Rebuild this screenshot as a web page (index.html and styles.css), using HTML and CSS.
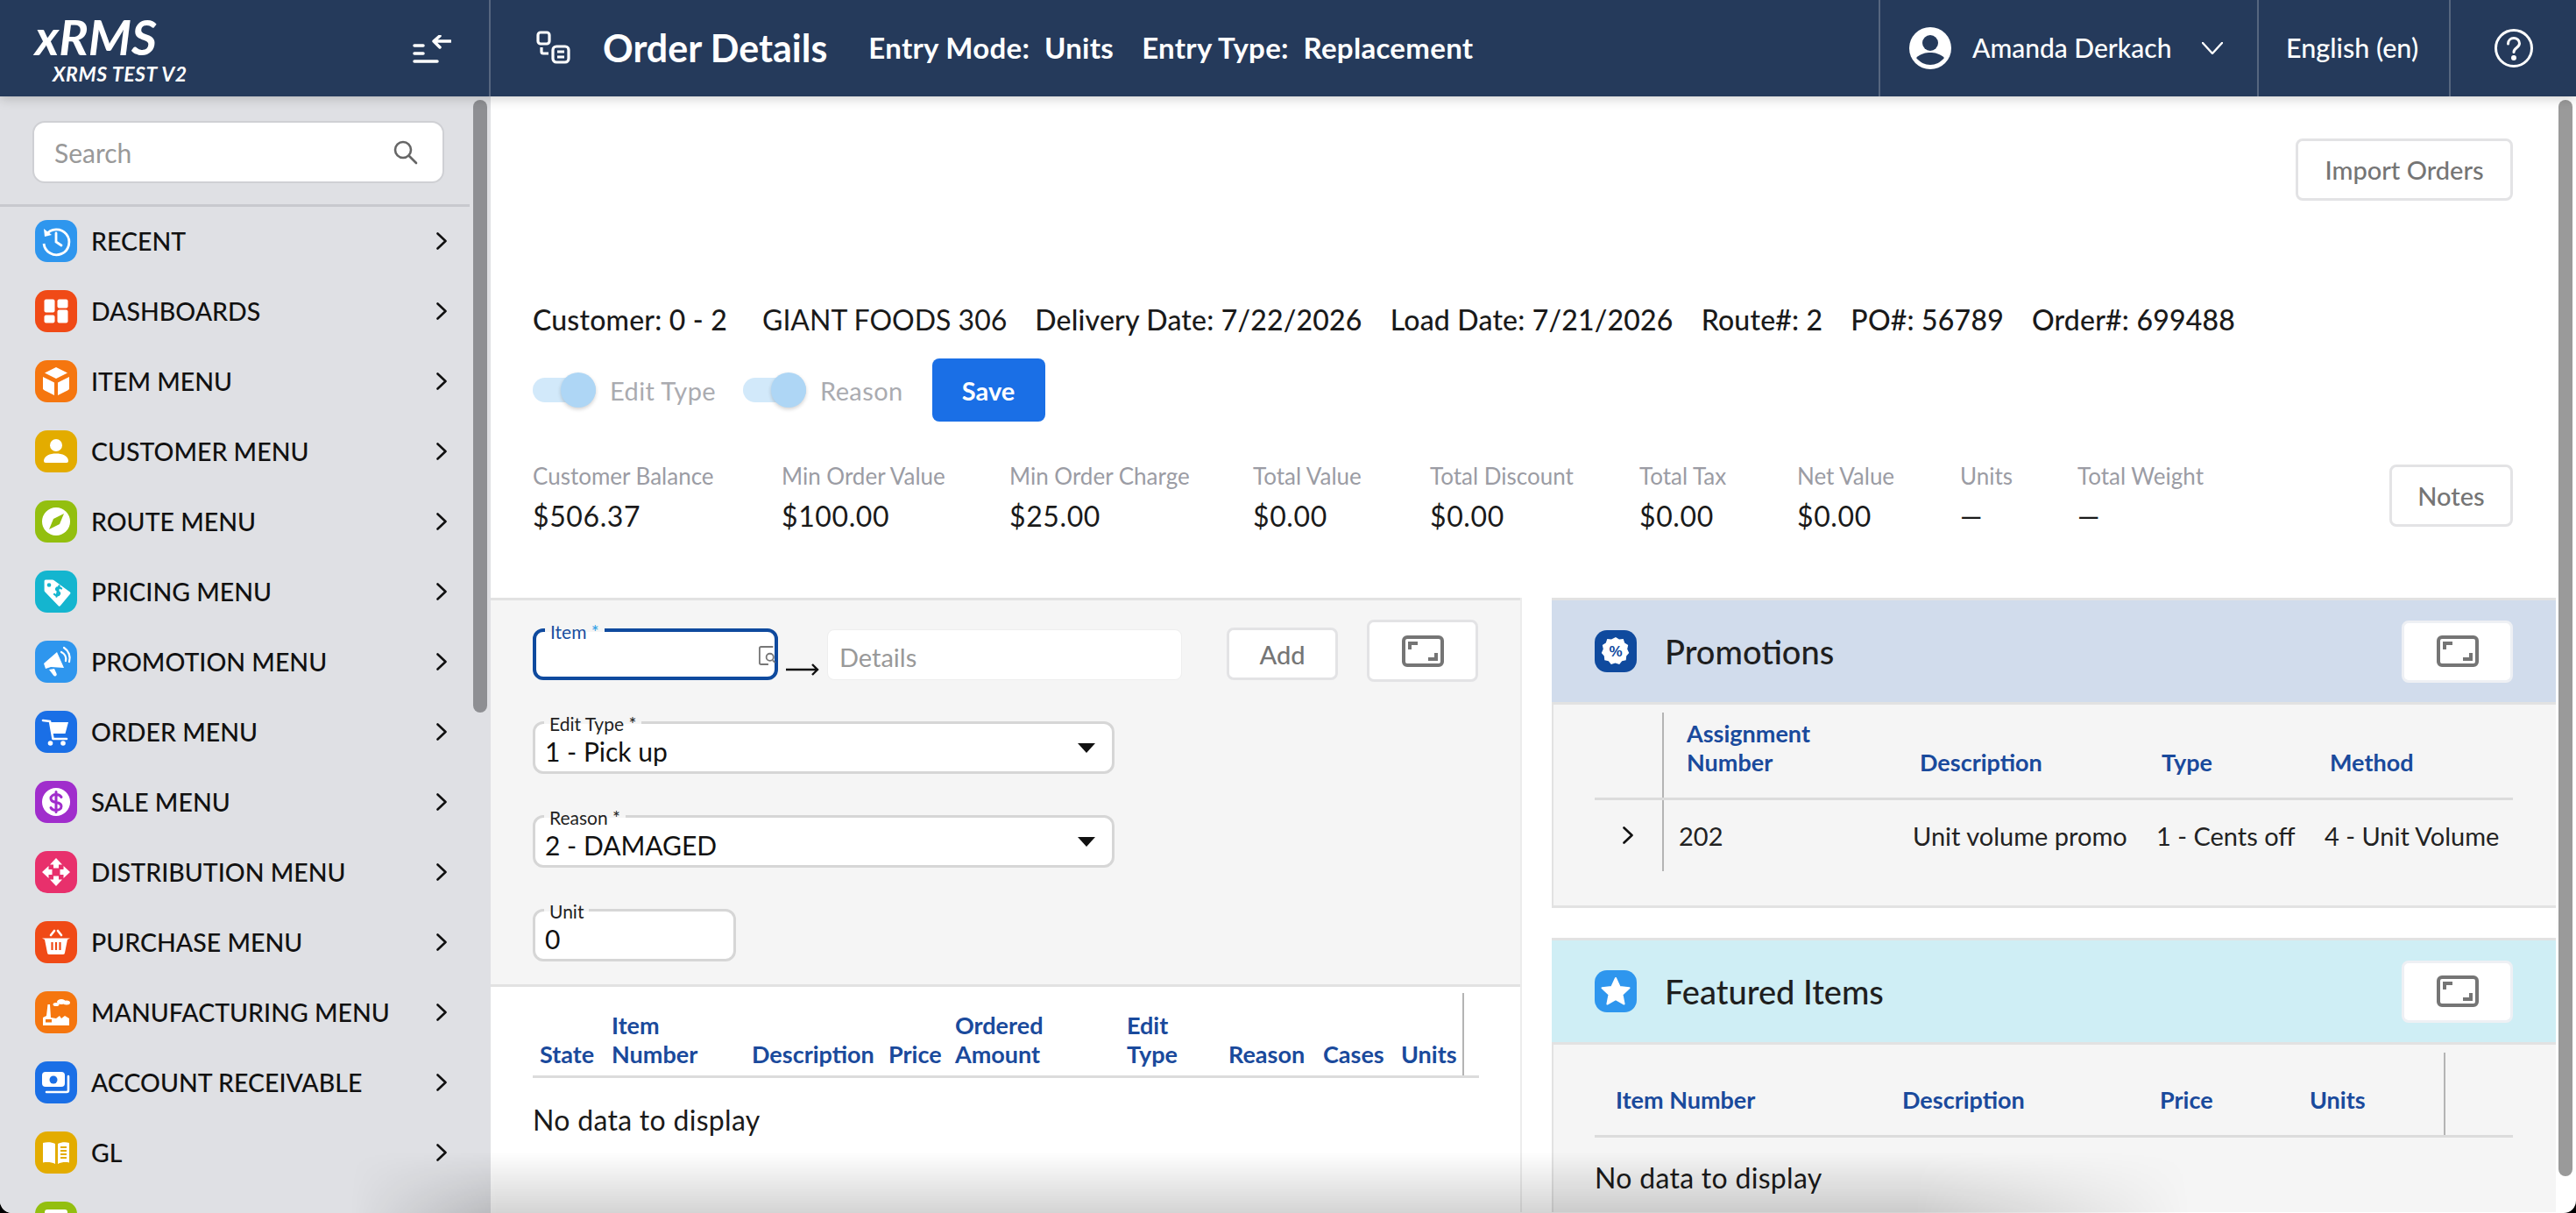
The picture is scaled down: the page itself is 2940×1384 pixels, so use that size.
FILE: index.html
```html
<!DOCTYPE html>
<html lang="en">
<head>
    <meta charset="UTF-8">
    <title>Order Details</title>
    <link rel="stylesheet" href="styles.css">
</head>
<body>
<div class="app">
    <header class="topbar">
        <div class="brand">
            <div class="logo">
                <div class="logo-name">xRMS</div>
                <div class="logo-sub">XRMS TEST V2</div>
            </div>
            <svg class="collapse-icon" viewBox="0 0 44 32" fill="none" stroke="#fff" stroke-width="3.5" stroke-linecap="round" stroke-linejoin="round">
                <path d="M2 12h10M2 21h10M2 30h26M43 7H24M31 1l-7 6 7 7"/>
            </svg>
        </div>
        <div class="page-title">
            <svg class="page-icon" viewBox="0 0 40 38" fill="none" stroke="#fff" stroke-width="3.2" stroke-linejoin="round">
                <rect x="2" y="2" width="13" height="13" rx="3"/>
                <path d="M6 19v5a2 2 0 0 0 2 2h6"/>
                <rect x="19" y="18" width="18" height="18" rx="4"/>
                <path d="M24 24h8M24 30h8"/>
            </svg>
            <h1>Order Details</h1>
            <span class="entry-info">Entry Mode:&nbsp; Units</span>
            <span class="entry-info">Entry Type:&nbsp; Replacement</span>
        </div>
        <div class="user-box">
            <svg class="avatar" viewBox="0 0 48 48">
                <circle cx="24" cy="24" r="24" fill="#fff"/>
                <circle cx="24" cy="18" r="9" fill="#253a5b"/>
                <path d="M8 35c5-5 11-6 16-6s11 1 16 6c-4 5-10 8-16 8s-12-3-16-8z" fill="#253a5b"/>
            </svg>
            <span class="user-name">Amanda Derkach</span>
            <svg class="user-caret" viewBox="0 0 24 14" fill="none" stroke="#fff" stroke-width="2.4" stroke-linecap="round" stroke-linejoin="round"><path d="M1 1l11 12L23 1"/></svg>
        </div>
        <div class="lang-box">English (en)</div>
        <div class="help-box">
            <svg class="help-icon" viewBox="0 0 44 44" fill="none" stroke="#fff" stroke-width="3"><circle cx="22" cy="22" r="20.5"/><path d="M15.5 17c0-4 3-6.500 6.500-6.500s6.500 2.500 6.500 6c0 5-6.500 5-6.500 10" stroke-linecap="round"/><circle cx="22" cy="33" r="1.500" fill="#fff"/></svg>
        </div>
    </header>

    <div class="layout">
        <aside class="sidebar">
            <div class="search-wrap">
                <div class="search-box">
                    <span>Search</span>
                    <svg class="search-icon" viewBox="0 0 28 28" fill="none" stroke="#666" stroke-width="2.600" stroke-linecap="round"><circle cx="11" cy="11" r="9"/><path d="M18 18l8 8"/></svg>
                </div>
            </div>
            <nav class="menu">
                <div class="menu-item"><span class="ico ico-blue"><svg viewBox="0 0 48 48"><path d="M12.500 17A14.500 14.500 0 1 1 10 27" fill="none" stroke="#fff" stroke-width="2.800"/><path d="M10 10l1 9 8-2z" fill="#fff"/><path d="M24 15v10l6 4" fill="none" stroke="#fff" stroke-width="2.800" stroke-linecap="round"/></svg></span><span class="menu-label">RECENT</span><svg class="chev" viewBox="0 0 12 20"><path d="M1.500 1.500l9 8.500-9 8.500"/></svg></div>
                <div class="menu-item"><span class="ico ico-red"><svg viewBox="0 0 48 48" fill="#fff"><rect x="10.500" y="10.500" width="12" height="15" rx="2"/><rect x="25.500" y="10.500" width="12" height="10" rx="2"/><rect x="10.500" y="28.500" width="12" height="9" rx="2"/><rect x="25.500" y="22.500" width="12" height="15" rx="2"/></svg></span><span class="menu-label">DASHBOARDS</span><svg class="chev" viewBox="0 0 12 20"><path d="M1.500 1.500l9 8.500-9 8.500"/></svg></div>
                <div class="menu-item"><span class="ico ico-orange"><svg viewBox="0 0 48 48" fill="#fff"><path d="M24 8l13 6.500-13 6.500-13-6.500z"/><path d="M9 19l13 6.500V40L11 34.500 9 33z"/><path d="M39 19l-13 6.500V40l11-5.500 2-1.500z"/></svg></span><span class="menu-label">ITEM MENU</span><svg class="chev" viewBox="0 0 12 20"><path d="M1.500 1.500l9 8.500-9 8.500"/></svg></div>
                <div class="menu-item"><span class="ico ico-yellow"><svg viewBox="0 0 48 48" fill="#fff"><circle cx="24" cy="17" r="7"/><path d="M10 35c0-6 7-8.500 14-8.500S38 29 38 35a2 2 0 0 1-2 2H12a2 2 0 0 1-2-2z"/></svg></span><span class="menu-label">CUSTOMER MENU</span><svg class="chev" viewBox="0 0 12 20"><path d="M1.500 1.500l9 8.500-9 8.500"/></svg></div>
                <div class="menu-item"><span class="ico ico-green"><svg viewBox="0 0 48 48"><circle cx="24" cy="24" r="16" fill="#fff"/><path d="M33 15l-5 12-12 6 5-12z" fill="#93bf0f"/></svg></span><span class="menu-label">ROUTE MENU</span><svg class="chev" viewBox="0 0 12 20"><path d="M1.500 1.500l9 8.500-9 8.500"/></svg></div>
                <div class="menu-item"><span class="ico ico-teal"><svg viewBox="0 0 48 48"><path d="M12 10.500h8a2 2 0 0 1 1.400.6l18.500 13.400a1.500 1.500 0 0 1 .3 2L29 40a1.500 1.500 0 0 1-2.300.200L11.500 24.500a2 2 0 0 1-.9-1.500V12a1.500 1.500 0 0 1 1.400-1.500z" fill="#fff"/><circle cx="16" cy="16.500" r="2.300" fill="#14b5cf"/><path d="M30 20.500c-2-2-5.500-1.500-6 .5s5 3 4 5.500-4.500 2-6 .5M27.500 17.500l-3 12" fill="none" stroke="#14b5cf" stroke-width="2.400" stroke-linecap="round"/></svg></span><span class="menu-label">PRICING MENU</span><svg class="chev" viewBox="0 0 12 20"><path d="M1.500 1.500l9 8.500-9 8.500"/></svg></div>
                <div class="menu-item"><span class="ico ico-sky"><svg viewBox="0 0 48 48" fill="#fff"><path d="M25 13l8 18-15-1-6 2-2-6z"/><path d="M16 33l6-1 2.500 5.500a2 2 0 0 1-3.500 2z"/><path d="M30 13a9 9 0 0 1 5 10M33 8a14 14 0 0 1 6 16" fill="none" stroke="#fff" stroke-width="2.300" stroke-linecap="round"/></svg></span><span class="menu-label">PROMOTION MENU</span><svg class="chev" viewBox="0 0 12 20"><path d="M1.500 1.500l9 8.500-9 8.500"/></svg></div>
                <div class="menu-item"><span class="ico ico-royal"><svg viewBox="0 0 48 48"><path d="M9 11l8 1 3.500 20H36" fill="none" stroke="#fff" stroke-width="2.600" stroke-linecap="round" stroke-linejoin="round"/><path d="M18 13h20l-3.500 13H20z" fill="#fff"/><circle cx="17.500" cy="37" r="2.800" fill="#fff"/><circle cx="32" cy="37" r="2.800" fill="#fff"/></svg></span><span class="menu-label">ORDER MENU</span><svg class="chev" viewBox="0 0 12 20"><path d="M1.500 1.500l9 8.500-9 8.500"/></svg></div>
                <div class="menu-item"><span class="ico ico-purple"><svg viewBox="0 0 48 48"><circle cx="24" cy="24" r="16" fill="#fff"/><path d="M30 18.500c-1-2-3.500-3-6-3-3 0-6 1.500-6 4.500s3 4 6 4.500 6 1.500 6 4.500-3 4.500-6 4.500c-2.500 0-5-1-6-3M24 12.500v23" fill="none" stroke="#a02dcc" stroke-width="3" stroke-linecap="round"/></svg></span><span class="menu-label">SALE MENU</span><svg class="chev" viewBox="0 0 12 20"><path d="M1.500 1.500l9 8.500-9 8.500"/></svg></div>
                <div class="menu-item"><span class="ico ico-pink"><svg viewBox="0 0 48 48" fill="#fff"><path d="M24 8l7 7.500h-4v4h-6v-4h-4z"/><path d="M24 40l7-7.500h-4v-4h-6v4h-4z"/><path d="M8 24l7.500-7v4h4v6h-4v4z"/><path d="M40 24l-7.500-7v4h-4v6h4v4z"/></svg></span><span class="menu-label">DISTRIBUTION MENU</span><svg class="chev" viewBox="0 0 12 20"><path d="M1.500 1.500l9 8.500-9 8.500"/></svg></div>
                <div class="menu-item"><span class="ico ico-red"><svg viewBox="0 0 48 48"><path d="M8 19.500h32l-3 1.500-3 15a2 2 0 0 1-2 2H16a2 2 0 0 1-2-2l-3-15z" fill="#fff"/><path d="M19.500 24v9M24 24v9M28.500 24v9" stroke="#f04a16" stroke-width="2.200"/><path d="M18 16l4-5M30 16l-4-5" stroke="#fff" stroke-width="2.600" stroke-linecap="round"/></svg></span><span class="menu-label">PURCHASE MENU</span><svg class="chev" viewBox="0 0 12 20"><path d="M1.500 1.500l9 8.500-9 8.500"/></svg></div>
                <div class="menu-item"><span class="ico ico-orange"><svg viewBox="0 0 48 48" fill="#fff"><path d="M9 39V30l4-2 1.500-13h2.500l1 15 6 1 4-3 2 3 4-3 5 3v8z"/><ellipse cx="30" cy="12" rx="5" ry="3"/><ellipse cx="36" cy="13" rx="4" ry="2.500"/><ellipse cx="24" cy="15" rx="3.500" ry="2"/><rect x="12" y="32" width="7" height="3.500" fill="#f5760f"/></svg></span><span class="menu-label">MANUFACTURING MENU</span><svg class="chev" viewBox="0 0 12 20"><path d="M1.500 1.500l9 8.500-9 8.500"/></svg></div>
                <div class="menu-item"><span class="ico ico-royal"><svg viewBox="0 0 48 48"><rect x="8" y="12" width="26" height="17" rx="4" fill="#fff"/><circle cx="21" cy="21" r="4.500" fill="#1a6fe6"/><path d="M38 17v16a2 2 0 0 1-2 2H13" fill="none" stroke="#fff" stroke-width="2.600" stroke-linecap="round"/></svg></span><span class="menu-label">ACCOUNT RECEIVABLE</span><svg class="chev" viewBox="0 0 12 20"><path d="M1.500 1.500l9 8.500-9 8.500"/></svg></div>
                <div class="menu-item"><span class="ico ico-yellow"><svg viewBox="0 0 48 48"><path d="M9 13c5-1.500 10-1 14 1v23c-4-2-9-2.500-14-1.500z" fill="#fff"/><path d="M26 14c4-2 9-2.500 13-1v22.500c-4-1-9-.500-13 1.500z" fill="#fff"/><path d="M29 18h7M29 22h7M29 26h7M29 30h7" stroke="#e3ac00" stroke-width="1.800"/></svg></span><span class="menu-label">GL</span><svg class="chev" viewBox="0 0 12 20"><path d="M1.500 1.500l9 8.500-9 8.500"/></svg></div>
                <div class="menu-item"><span class="ico ico-green"><svg viewBox="0 0 48 48"><rect x="11" y="9" width="26" height="28" rx="3" fill="#fff"/></svg></span></div>
            </nav>
            <div class="thumb thumb-side"></div>
        </aside>

        <main class="content">
            <div class="actions">
                <button class="btn btn-wide">Import Orders</button>
            </div>
            <div class="cust-line">
                <span class="cust-id">Customer: 0 - 2</span>
                <span class="cust-name">GIANT FOODS 306</span>
                <span>Delivery Date: 7/22/2026</span>
                <span>Load Date: 7/21/2026</span>
                <span>Route#: 2</span>
                <span>PO#: 56789</span>
                <span>Order#: 699488</span>
            </div>
            <div class="edit-row">
                <span class="toggle"></span><span class="toggle-label">Edit Type</span>
                <span class="toggle"></span><span class="toggle-label toggle-label-2">Reason</span>
                <button class="btn-save">Save</button>
            </div>
            <div class="stats">
                <div class="stat stat-1"><label>Customer Balance</label><b>$506.37</b></div>
                <div class="stat stat-2"><label>Min Order Value</label><b>$100.00</b></div>
                <div class="stat stat-3"><label>Min Order Charge</label><b>$25.00</b></div>
                <div class="stat stat-4"><label>Total Value</label><b>$0.00</b></div>
                <div class="stat stat-5"><label>Total Discount</label><b>$0.00</b></div>
                <div class="stat stat-6"><label>Total Tax</label><b>$0.00</b></div>
                <div class="stat stat-7"><label>Net Value</label><b>$0.00</b></div>
                <div class="stat stat-8"><label>Units</label><b>—</b></div>
                <div class="stat stat-9"><label>Total Weight</label><b>—</b></div>
                <button class="btn btn-notes">Notes</button>
            </div>

            <div class="panels">
                <section class="left-panel">
                    <div class="entry-form">
                        <div class="item-row">
                            <div class="field field-item">
                                <label>Item <i>*</i></label>
                                <svg class="lookup" viewBox="0 0 22 24" fill="none" stroke="#777" stroke-width="2"><path d="M18 1H3a2 2 0 0 0-2 2v18a2 2 0 0 0 2 2h9"/><circle cx="14" cy="14" r="4.500"/><path d="M17.500 18l3 3"/></svg>
                            </div>
                            <svg class="arrow" viewBox="0 0 38 14" fill="none" stroke="#111" stroke-width="2.400"><path d="M0 7h36M30 1l6 6-6 6"/></svg>
                            <div class="details">Details</div>
                            <button class="btn btn-add">Add</button>
                            <button class="btn btn-expand"><svg class="expand-icon" viewBox="0 0 48 36" fill="none" stroke="#757575" stroke-width="4"><rect x="2" y="2" width="44" height="32" rx="4"/><path d="M9 16V9h9M39 20v7h-9"/></svg></button>
                        </div>
                        <div class="field field-select">
                            <label>Edit Type *</label>
                            <span>1 - Pick up</span>
                            <span class="caret"></span>
                        </div>
                        <div class="field field-select">
                            <label>Reason *</label>
                            <span>2 - DAMAGED</span>
                            <span class="caret"></span>
                        </div>
                        <div class="field field-unit">
                            <label>Unit</label>
                            <span>0</span>
                        </div>
                    </div>
                    <table class="data-table order-table">
                        <colgroup><col class="c82"><col class="c160"><col class="c156"><col class="c76"><col class="c196"><col class="c116"><col class="c108"><col class="c89"><col class="c79"><col class="c18"></colgroup>
                        <tr>
                            <th>State</th><th>Item<br>Number</th><th>Description</th><th>Price</th><th>Ordered<br>Amount</th><th>Edit<br>Type</th><th>Reason</th><th>Cases</th><th class="v-line">Units</th><th></th>
                        </tr>
                    </table>
                    <p class="no-data">No data to display</p>
                </section>

                <section class="right-panel">
                    <div class="card">
                        <div class="card-head head-promo">
                            <span class="ico ico-navy"><svg viewBox="0 0 48 48"><path d="M24 8l4 2.500 4.700-.500 1.500 4.500 4 2.500-1 4.500 2 4.500-3 3.500-.5 4.700-4.500 1-3 3.800-4.700-1.500-4.700 1.500-3-3.800-4.500-1-.5-4.700-3-3.500 2-4.500-1-4.500 4-2.500 1.500-4.500 4.700.500z" fill="#fff"/><text x="24" y="30" class="pct">%</text></svg></span>
                            <h2>Promotions</h2>
                            <button class="btn btn-expand"><svg class="expand-icon" viewBox="0 0 48 36" fill="none" stroke="#757575" stroke-width="4"><rect x="2" y="2" width="44" height="32" rx="4"/><path d="M9 16V9h9M39 20v7h-9"/></svg></button>
                        </div>
                        <div class="card-body promo-body">
                            <table class="data-table promo-table">
                                <colgroup><col class="c78"><col class="c277"><col class="c278"><col class="c192"><col class="c223"></colgroup>
                                <tr>
                                    <th class="v-line"></th><th class="p26">Assignment<br>Number</th><th class="p16">Description</th><th class="p14">Type</th><th class="p14">Method</th>
                                </tr>
                                <tr class="promo-row">
                                    <td class="v-line chev-cell"><svg class="chev" viewBox="0 0 12 20"><path d="M1.500 1.500l9 8.500-9 8.500"/></svg></td><td class="p17">202</td><td>Unit volume promo</td><td>1 - Cents off</td><td>4 - Unit Volume</td>
                                </tr>
                            </table>
                        </div>
                    </div>
                    <div class="card card-featured">
                        <div class="card-head head-feat">
                            <span class="ico ico-sky"><svg viewBox="0 0 48 48"><path d="M24 9l4.600 10 10.900 1.300-8 7.400 2.100 10.800L24 33.200l-9.600 5.300 2.100-10.800-8-7.400L19.400 19z" fill="#fff" stroke="#fff" stroke-width="2" stroke-linejoin="round"/></svg></span>
                            <h2>Featured Items</h2>
                            <button class="btn btn-expand"><svg class="expand-icon" viewBox="0 0 48 36" fill="none" stroke="#757575" stroke-width="4"><rect x="2" y="2" width="44" height="32" rx="4"/><path d="M9 16V9h9M39 20v7h-9"/></svg></button>
                        </div>
                        <div class="card-body feat-body">
                            <table class="data-table feat-table">
                                <colgroup><col class="c340"><col class="c285"><col class="c180"><col class="c165"><col class="c78"></colgroup>
                                <tr>
                                    <th class="p24">Item Number</th><th class="p11">Description</th><th class="p20">Price</th><th class="p11 v-line">Units</th><th></th>
                                </tr>
                            </table>
                            <p class="no-data">No data to display</p>
                        </div>
                    </div>
                </section>
            </div>
            <div class="thumb thumb-main"></div>
        </main>
    </div>
    <div class="bottom-shade"></div>
</div>
</body>
</html>
```

FILE: styles.css
```css
* {
    box-sizing: border-box;
}
body {
    margin: 0;
    background: #000;
    font-family: "Lato", "Noto Sans", sans-serif;
    color: #111;
}
.app {
    position: relative;
    width: 2940px;
    height: 1384px;
    overflow: hidden;
    background: #fff;
    border-radius: 0 0 14px 14px;
}
h1, h2, p {
    margin: 0;
}
button {
    font-family: inherit;
}

/* top bar */
.topbar {
    position: relative;
    z-index: 2;
    display: flex;
    height: 110px;
    background: #253a5b;
    color: #fff;
    box-shadow: 0 3px 12px rgba(0, 0, 0, .18);
}
.brand {
    display: flex;
    align-items: center;
    justify-content: space-between;
    width: 560px;
    padding: 0 43px 0 40px;
    border-right: 2px solid #56667f;
}
.logo {
    align-self: flex-start;
    padding-top: 18px;
}
.logo-name {
    font-size: 56px;
    line-height: 48px;
    font-weight: 700;
    font-style: italic;
}
.logo-sub {
    font-size: 23px;
    line-height: 22px;
    font-weight: 700;
    font-style: italic;
    letter-spacing: .6px;
    margin: 7px 0 0 20px;
}
.collapse-icon {
    width: 44px;
    height: 32px;
    margin-top: 2px;
}
.page-title {
    display: flex;
    align-items: center;
    flex: 1;
    padding: 0 0 2px 52px;
}
.page-icon {
    width: 40px;
    height: 38px;
    margin-right: 36px;
}
.page-title h1 {
    font-size: 43px;
    font-weight: 700;
    margin-right: 47px;
}
.entry-info {
    font-size: 33px;
    font-weight: 700;
    letter-spacing: .3px;
    margin-right: 32px;
}
.user-box {
    display: flex;
    align-items: center;
    width: 432px;
    padding-left: 33px;
    border-left: 2px solid #56667f;
}
.avatar {
    width: 48px;
    height: 48px;
}
.user-name {
    font-size: 30px;
    font-weight: 500;
    margin: -3px 0 0 24px;
    width: 262px;
}
.user-caret {
    width: 24px;
    height: 14px;
}
.lang-box {
    display: flex;
    align-items: center;
    width: 219px;
    padding: 0 0 3px 31px;
    border-left: 2px solid #56667f;
    font-size: 30.500px;
    font-weight: 500;
}
.help-box {
    display: flex;
    align-items: center;
    width: 145px;
    padding-left: 50px;
    border-left: 2px solid #56667f;
}
.help-icon {
    width: 44px;
    height: 44px;
}

.layout {
    display: flex;
    height: 1274px;
}

/* sidebar */
.sidebar {
    position: relative;
    width: 560px;
    flex: none;
    background: #dfe0e4;
}
.search-wrap {
    width: 536px;
    height: 126px;
    padding: 28px 0 0 37px;
    border-bottom: 3px solid #c8c9ce;
}
.search-box {
    display: flex;
    align-items: center;
    justify-content: space-between;
    width: 470px;
    height: 71px;
    padding: 0 28px 0 23px;
    background: #fff;
    border: 2px solid #cfd0d4;
    border-radius: 14px;
    font-size: 30px;
    color: #999;
}
.search-icon {
    width: 28px;
    height: 28px;
}
.menu {
    margin-top: -1px;
}
.menu-item {
    display: flex;
    align-items: center;
    width: 536px;
    height: 80px;
    padding-left: 40px;
}
.ico {
    display: block;
    width: 48px;
    height: 48px;
    flex: none;
    border-radius: 14px;
}
.ico svg {
    display: block;
    width: 48px;
    height: 48px;
}
.ico-blue { background: #2e96ee; }
.ico-sky { background: #2e96ee; }
.ico-red { background: #f04a16; }
.ico-orange { background: #f5760f; }
.ico-yellow { background: #e3ac00; }
.ico-green { background: #93bf0f; }
.ico-teal { background: #14b5cf; }
.ico-royal { background: #1a6fe6; }
.ico-purple { background: #a02dcc; }
.ico-pink { background: #e8306c; }
.ico-navy { background: #0f4a9e; }
.menu-label {
    flex: 1;
    margin-left: 16px;
    font-size: 28.500px;
    font-weight: 500;
}
.chev {
    width: 12px;
    height: 20px;
    margin-right: 26px;
    fill: none;
    stroke: #111;
    stroke-width: 2.600;
    stroke-linecap: round;
    stroke-linejoin: round;
}
.thumb {
    position: absolute;
    width: 16px;
    border-radius: 8px;
}
.thumb-side {
    left: 540px;
    top: 4px;
    height: 699px;
    background: #8e8f93;
}
.thumb-main {
    left: 2360px;
    top: 4px;
    height: 1228px;
    background: #9a9a9a;
}

/* main area */
.content {
    position: relative;
    flex: 1;
}
.actions {
    display: flex;
    justify-content: flex-end;
    padding: 48px 72px 0 0;
}
.btn {
    background: #fff;
    border: 3px solid #e3e3e5;
    border-radius: 8px;
    color: #757575;
    font-size: 29px;
    font-weight: 500;
    padding: 0;
}
.btn-wide {
    width: 248px;
    height: 71px;
}
.cust-line {
    display: flex;
    margin-top: 116px;
    padding-left: 48px;
    font-size: 32px;
    line-height: 40px;
    letter-spacing: .2px;
    font-weight: 500;
    color: #1a1a1a;
}
.cust-line span {
    margin-right: 32px;
}
.cust-line .cust-id {
    margin-right: 40px;
}
.cust-line .cust-name {
    font-weight: 400;
    letter-spacing: 0;
}
.edit-row {
    display: flex;
    align-items: center;
    height: 72px;
    margin-top: 24px;
    padding-left: 48px;
}
.toggle {
    position: relative;
    display: block;
    width: 72px;
    height: 28px;
    background: #d2e9fa;
    border-radius: 14px;
}
.toggle::after {
    content: "";
    position: absolute;
    right: 0;
    top: -6px;
    width: 40px;
    height: 40px;
    background: #aed6f5;
    border-radius: 50%;
    box-shadow: 0 2px 4px rgba(0, 0, 0, .18);
}
.toggle-label {
    margin-left: 16px;
    margin-right: 31px;
    font-size: 29px;
    letter-spacing: .4px;
    color: #aaabb0;
}
.toggle-label-2 {
    margin-right: 33px;
}
.btn-save {
    width: 129px;
    height: 72px;
    background: #1a6fe6;
    border: 0;
    border-radius: 8px;
    color: #fff;
    font-size: 29px;
    font-weight: 700;
}
.stats {
    display: flex;
    height: 71px;
    margin-top: 49px;
    padding-left: 48px;
}
.stat {
    flex: none;
}
.stat label {
    display: block;
    font-size: 26px;
    line-height: 26px;
    color: #9b9ca4;
}
.stat b {
    display: block;
    margin-top: 15px;
    font-size: 32px;
    line-height: 36px;
    letter-spacing: .6px;
    font-weight: 400;
    color: #1a1a1a;
}
.stat-1 { width: 284px; }
.stat-2 { width: 260px; }
.stat-3 { width: 278px; }
.stat-4 { width: 202px; }
.stat-5 { width: 239px; }
.stat-6 { width: 180px; }
.stat-7 { width: 186px; }
.stat-8 { width: 134px; }
.stat-9 { width: 356px; }
.btn-notes {
    width: 141px;
    height: 71px;
}

.panels {
    display: flex;
    margin-top: 81px;
}
.left-panel {
    width: 1177px;
    flex: none;
    height: 701px;
    border-right: 2px solid #ececec;
}
.entry-form {
    height: 444px;
    padding: 22px 0 0 48px;
    background: #f5f5f5;
    border-top: 3px solid #e2e2e2;
    border-bottom: 3px solid #e2e2e2;
}
.item-row {
    display: flex;
    align-items: flex-start;
    height: 71px;
}
.field {
    position: relative;
    background: #fff;
    border: 3px solid #d6d6d6;
    border-radius: 12px;
    font-size: 30px;
}
.field label {
    position: absolute;
    left: 10px;
    top: -12px;
    padding: 0 6px;
    font-size: 21px;
    line-height: 24px;
    color: #222;
    background: linear-gradient(#f5f5f5 50%, #fff 50%);
}
.field-item {
    width: 280px;
    height: 59px;
    margin-top: 10px;
    border: 4px solid #0f4a9e;
}
.field-item label {
    color: #1a4fa0;
}
.field-item label i {
    font-style: normal;
    color: #2e9fe6;
}
.lookup {
    position: absolute;
    right: -2px;
    top: 16px;
    width: 20px;
    height: 22px;
}
.arrow {
    width: 38px;
    height: 14px;
    margin: 50px 9px 0 9px;
    flex: none;
}
.details {
    width: 405px;
    height: 58px;
    margin-top: 11px;
    padding: 14px 0 0 13px;
    background: #fff;
    border: 1px solid #eee;
    border-radius: 8px;
    font-size: 29px;
    line-height: 34px;
    color: #999;
}
.btn-add {
    width: 127px;
    height: 60px;
    margin: 9px 0 0 51px;
}
.btn-expand {
    display: flex;
    align-items: center;
    justify-content: center;
    width: 127px;
    height: 71px;
    flex: none;
}
.item-row .btn-expand {
    margin-left: 33px;
}
.expand-icon {
    width: 48px;
    height: 36px;
}
.field-select,
.field-unit {
    display: flex;
    align-items: center;
    height: 60px;
    padding: 8px 0 0 11px;
}
.field-select {
    width: 664px;
    margin-top: 47px;
    justify-content: space-between;
    padding-right: 19px;
}
.item-row + .field-select {
    margin-top: 45px;
}
.field-unit {
    width: 232px;
    margin-top: 47px;
}
.caret {
    width: 0;
    height: 0;
    margin-bottom: 8px;
    border-left: 10px solid transparent;
    border-right: 10px solid transparent;
    border-top: 11px solid #111;
}

/* tables */
.data-table {
    table-layout: fixed;
    border-collapse: collapse;
}
.data-table th {
    padding: 0 0 8px 8px;
    border-bottom: 3px solid #dcdcdc;
    vertical-align: bottom;
    text-align: left;
    font-size: 27px;
    line-height: 33px;
    font-weight: 700;
    color: #1a4a9c;
}
.data-table th.v-line,
.data-table td.v-line {
    border-right: 2px solid #b4b4b4;
}
.order-table {
    width: 1080px;
    margin: 7px 0 0 48px;
}
.order-table th {
    height: 95px;
}
.no-data {
    margin: 28px 0 0 48px;
    font-size: 32px;
    line-height: 40px;
    letter-spacing: .3px;
    color: #1a1a1a;
}
.c18 { width: 18px; }
.c76 { width: 76px; }
.c78 { width: 78px; }
.c79 { width: 79px; }
.c82 { width: 82px; }
.c89 { width: 89px; }
.c108 { width: 108px; }
.c116 { width: 116px; }
.c156 { width: 156px; }
.c160 { width: 160px; }
.c165 { width: 165px; }
.c180 { width: 180px; }
.c192 { width: 192px; }
.c196 { width: 196px; }
.c223 { width: 223px; }
.c277 { width: 277px; }
.c278 { width: 278px; }
.c285 { width: 285px; }
.c340 { width: 340px; }

/* right cards */
.right-panel {
    width: 1146px;
    flex: none;
    margin-left: 34px;
}
.card-head {
    display: flex;
    align-items: center;
    height: 122px;
    padding: 0 49px;
    border-top: 3px solid #e2e2e2;
    border-bottom: 3px solid #e2e2e2;
}
.head-promo {
    background: #d1dcec;
}
.head-feat {
    background: #cfeef5;
}
.card-head h2 {
    flex: 1;
    margin-left: 32px;
    font-size: 38px;
    font-weight: 500;
    color: #1f1f1f;
}
.card-head .btn-expand {
    border-color: #eef0f4;
}
.pct {
    font-family: "Liberation Sans", sans-serif;
    font-size: 17px;
    font-weight: 700;
    fill: #0f4a9e;
    text-anchor: middle;
}
.card-body {
    background: #f5f5f5;
    padding: 9px 49px 0 47px;
    border-left: 2px solid #e2e2e2;
}
.promo-body {
    height: 232px;
    border-bottom: 3px solid #e2e2e2;
}
.card-featured {
    margin-top: 34px;
}
.feat-body {
    height: 191px;
}
.promo-table {
    width: 1048px;
}
.promo-table th {
    height: 98px;
    padding-bottom: 24px;
}
.promo-table td {
    height: 83px;
    padding: 0 0 0 8px;
    font-size: 29px;
    color: #222;
}
.chev-cell .chev {
    display: block;
    margin: 0 0 0 24px;
}
.p11 { padding-left: 11px !important; }
.p14 { padding-left: 14px !important; }
.p16 { padding-left: 16px !important; }
.p17 { padding-left: 17px !important; }
.p20 { padding-left: 20px !important; }
.p24 { padding-left: 24px !important; }
.p26 { padding-left: 26px !important; }
.feat-table {
    width: 1048px;
}
.feat-table th {
    height: 95px;
    padding-bottom: 24px;
}
.feat-body .no-data {
    margin: 26px 0 0 0;
}

/* fade along the bottom edge of the window */
.bottom-shade {
    position: absolute;
    left: 400px;
    right: 440px;
    bottom: 0;
    height: 70px;
    pointer-events: none;
    background: linear-gradient(transparent, rgba(0, 0, 0, .17));
    -webkit-mask-image: linear-gradient(90deg, transparent, #000 8%, #000 85%, transparent);
    mask-image: linear-gradient(90deg, transparent, #000 8%, #000 85%, transparent);
}
```
